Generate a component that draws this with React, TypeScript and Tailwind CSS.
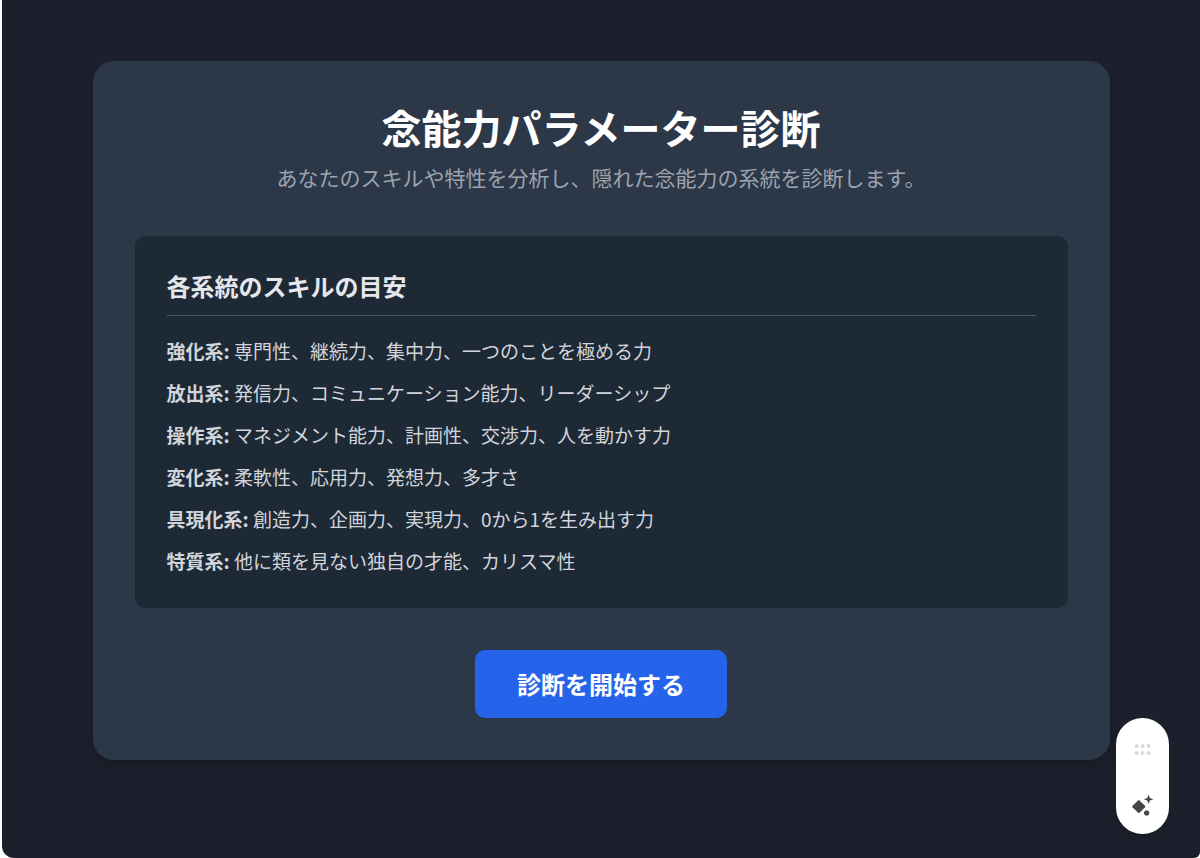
const systems = [
  { name: "強化系", skills: "専門性、継続力、集中力、一つのことを極める力" },
  { name: "放出系", skills: "発信力、コミュニケーション能力、リーダーシップ" },
  { name: "操作系", skills: "マネジメント能力、計画性、交渉力、人を動かす力" },
  { name: "変化系", skills: "柔軟性、応用力、発想力、多才さ" },
  { name: "具現化系", skills: "創造力、企画力、実現力、0から1を生み出す力" },
  { name: "特質系", skills: "他に類を見ない独自の才能、カリスマ性" },
];

function SkillGuide() {
  return (
    <section className="rounded-[10px] bg-[#1e2936] p-8">
      <h2 className="border-b border-[#4b5563] pb-[11px] text-2xl leading-9 font-bold text-[#e5e7eb]">
        各系統のスキルの目安
      </h2>
      <ul className="mt-5 flex flex-col gap-3 text-[19px] leading-[30px] text-[#d1d5db]">
        {systems.map((s) => (
          <li key={s.name}>
            <strong className="font-bold">{s.name}:</strong> {s.skills}
          </li>
        ))}
      </ul>
    </section>
  );
}

function FloatingTools() {
  return (
    <div className="fixed right-[31px] bottom-6 flex h-[116px] w-[53px] flex-col items-center justify-between rounded-full bg-white pt-6 pb-4 shadow-lg">
      <svg width="19" height="14" viewBox="0 0 19 14" fill="#d9d9d9" aria-hidden="true">
        <circle cx="3.6" cy="4" r="2" />
        <circle cx="9.6" cy="4" r="2" />
        <circle cx="15.6" cy="4" r="2" />
        <circle cx="3.6" cy="11" r="2" />
        <circle cx="9.6" cy="11" r="2" />
        <circle cx="15.6" cy="11" r="2" />
      </svg>
      <button type="button" aria-label="AI" className="flex h-6 w-[25px] items-center justify-center">
        <svg width="25" height="24" viewBox="0 0 25 24" fill="#444746" aria-hidden="true">
          <path d="M8.1 6.4 Q8.8 5.8 9.5 6.4 L15 11.8 Q15.6 12.5 15 13.2 L9.5 18.7 Q8.8 19.3 8.1 18.7 L2.5 13.2 Q1.9 12.5 2.5 11.8 Z" />
          <path d="M18.6 0.4 L19.9 3.9 L23.4 5.2 L19.9 6.5 L18.6 10 L17.3 6.5 L13.8 5.2 L17.3 3.9 Z" />
          <path d="M16.6 16.2 L18.6 17 L19.4 19 L18.6 21 L16.6 21.8 L14.6 21 L13.8 19 L14.6 17 Z" />
        </svg>
      </button>
    </div>
  );
}

export default function App() {
  return (
    <div className="min-h-screen bg-white pl-[2px] font-['Noto_Sans_CJK_JP',sans-serif]">
      <main className="flex min-h-screen items-start justify-center rounded-br-[6px] rounded-bl-[12px] bg-[#1c202c] px-6 py-[61px]">
        <div className="flex w-full max-w-[1017px] flex-col rounded-[21px] bg-[#2c3848] p-[42px] shadow-lg">
          <header className="text-center">
            <h1 className="text-[40px] leading-[48px] font-bold text-white">念能力パラメーター診断</h1>
            <p className="mt-[10px] text-[21px] leading-8 text-[#9ca3af]">
              あなたのスキルや特性を分析し、隠れた念能力の系統を診断します。
            </p>
          </header>
          <div className="mt-[43px]">
            <SkillGuide />
          </div>
          <button
            type="button"
            className="mt-[42px] self-center rounded-[10px] bg-[#2563eb] px-[42px] py-4 text-2xl leading-9 font-bold text-white"
          >
            診断を開始する
          </button>
        </div>
      </main>
      <FloatingTools />
    </div>
  );
}
